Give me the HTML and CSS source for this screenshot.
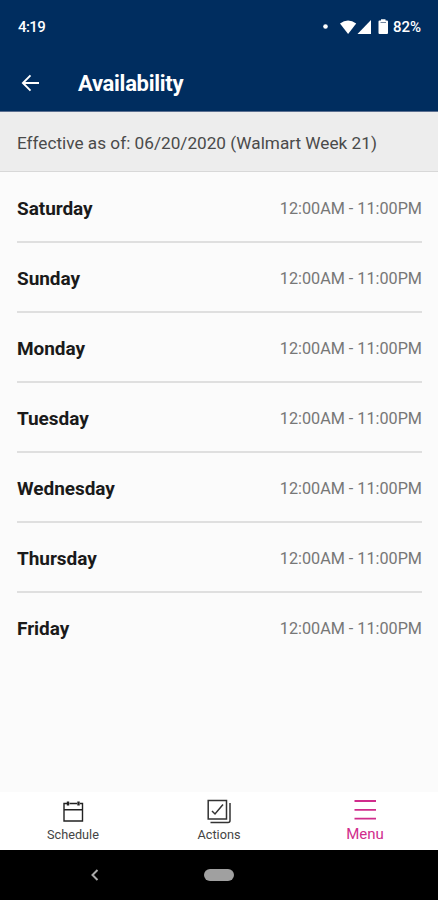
FILE: index.html
```html
<!DOCTYPE html>
<html lang="en">
<head>
    <meta charset="UTF-8">
    <meta name="viewport" content="width=device-width, initial-scale=1.0">
    <title>Availability</title>
    <link rel="stylesheet" href="styles.css">
</head>
<body>
    <div class="status-bar">
        <span class="clock">4:19</span>
        <svg class="status-icons" width="68" height="18" viewBox="0 0 68 18" fill="#fff">
            <circle cx="3.500" cy="8.500" r="2.300"/>
            <path d="M18 5.500Q26 -.5 34.200 5.500L26.100 16Z"/>
            <path d="M49 2v14H35.500Z"/>
            <path d="M57 2.500h2V1.200h4.500v1.300h1.500q1 0 1 1V15q0 1-1 1h-7.500q-1 0-1-1V3.500q0-1 1-1Z"/>
            <path d="M58.500 4.500h5.500" stroke="#7588a1"/>
        </svg>
        <span class="battery">82%</span>
    </div>

    <header class="app-bar">
        <svg class="back" width="20" height="18" viewBox="0 0 20 18" fill="none" stroke="#fff" stroke-width="1.9">
            <path d="M19 9H2.500M10.500 1.400L2.900 9l7.600 7.600"/>
        </svg>
        <h1>Availability</h1>
    </header>

    <div class="effective"><span>Effective as of: 06/20/2020 (Walmart Week 21)</span></div>

    <ul class="days">
        <li><span class="day">Saturday</span><span class="hours">12:00AM - 11:00PM</span></li>
        <li><span class="day">Sunday</span><span class="hours">12:00AM - 11:00PM</span></li>
        <li><span class="day">Monday</span><span class="hours">12:00AM - 11:00PM</span></li>
        <li><span class="day">Tuesday</span><span class="hours">12:00AM - 11:00PM</span></li>
        <li><span class="day">Wednesday</span><span class="hours">12:00AM - 11:00PM</span></li>
        <li><span class="day">Thursday</span><span class="hours">12:00AM - 11:00PM</span></li>
        <li><span class="day">Friday</span><span class="hours">12:00AM - 11:00PM</span></li>
    </ul>

    <nav class="tabs">
        <a class="tab">
            <svg width="26" height="26" viewBox="0 0 26 26" fill="none" stroke="#222" stroke-width="1.4">
                <path d="M7 4.500H4V22H22.500V4.500H20M9.500 4.500H17M4 10.800H22.500"/>
                <path d="M8 2.500V6.500M18.500 2.500V6.500" stroke-width="2.400"/>
            </svg>
            <span>Schedule</span>
        </a>
        <a class="tab">
            <svg width="26" height="26" viewBox="0 0 26 26" fill="none" stroke="#333" stroke-width="1.5">
                <path d="M2.200 1.500H20.500V20H2.200Z"/>
                <path d="M6 12l3 3L17 5.500"/>
                <path d="M24 4V21.500q0 2-2 2H4.500"/>
            </svg>
            <span>Actions</span>
        </a>
        <a class="tab active">
            <svg width="26" height="26" viewBox="0 0 26 26" fill="none" stroke="#d02c8c" stroke-width="1.8">
                <path d="M2.500 2H24M2.500 10.800H24M2.500 19.600H24"/>
            </svg>
            <span>Menu</span>
        </a>
    </nav>

    <div class="system-nav">
        <svg class="chevron" width="8" height="12" viewBox="0 0 8 12" fill="none" stroke="#aaa" stroke-width="2">
            <path d="M6.500 1L1.500 6l5 5"/>
        </svg>
        <div class="home-pill"></div>
    </div>
</body>
</html>
```
FILE: styles.css
```css
* {
    box-sizing: border-box;
}
body {
    margin: 0;
    height: 900px;
    display: flex;
    flex-direction: column;
    font-family: Roboto, sans-serif;
    background: #fbfbfb;
    overflow: hidden;
}
.status-bar {
    display: flex;
    align-items: center;
    height: 54px;
    padding: 0 17px 0 18px;
    background: #002d5f;
    color: #fff;
    font-size: 15px;
    font-weight: 500;
}
.clock {
    letter-spacing: -0.6px;
}
.status-icons {
    margin-left: auto;
    margin-right: 3px;
}
.app-bar {
    display: flex;
    align-items: center;
    height: 58px;
    padding: 0 20px;
    background: #002d5f;
    border-bottom: 1px solid #5b6f90;
    color: #fff;
}
.app-bar h1 {
    margin: 0 0 0 38px;
    padding-top: 2px;
    font-size: 22px;
    font-weight: 700;
    letter-spacing: -0.3px;
}
.effective {
    display: flex;
    align-items: center;
    height: 60px;
    padding: 2px 17px 0;
    background: #ededed;
    border-bottom: 1px solid #d8d8d8;
    color: #4a4a4a;
    font-size: 17.2px;
}
.days {
    flex: 1;
    margin: 0;
    padding: 1px 16px 0 17px;
    list-style: none;
}
.days li {
    display: flex;
    align-items: center;
    justify-content: space-between;
    height: 70px;
    padding-top: 2px;
    border-bottom: 2px solid #dfdfdf;
}
.days li:last-child {
    border-bottom-color: transparent;
}
.day {
    color: #1a1a1a;
    font-size: 19px;
    font-weight: 700;
    letter-spacing: -0.05px;
}
.hours {
    color: #777;
    font-size: 16.2px;
}
.tabs {
    display: flex;
    height: 58px;
    background: #fff;
}
.tab {
    flex: 1;
    display: flex;
    flex-direction: column;
    align-items: center;
    padding-top: 7px;
    color: #444;
    font-size: 12.7px;
    line-height: 20px;
}
.tab.active {
    color: #d02c8c;
    font-size: 15px;
    line-height: 18px;
}
.system-nav {
    display: grid;
    grid-template-columns: 1fr 30px 1fr;
    align-items: center;
    height: 50px;
    background: #000;
}
.chevron {
    margin-left: 91px;
}
.home-pill {
    grid-column: 2;
    height: 12px;
    border-radius: 6px;
    background: #a0a0a0;
}
```
